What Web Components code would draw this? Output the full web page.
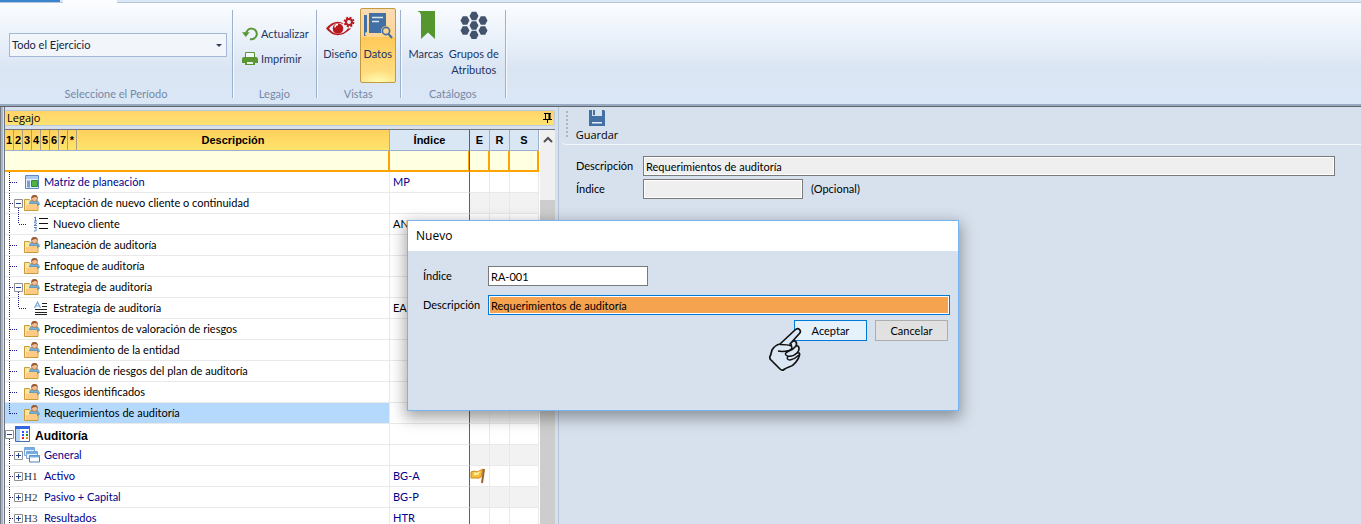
<!DOCTYPE html>
<html lang="es">
<head>
<meta charset="utf-8">
<title>Legajo</title>
<style>
  html, body { height: 100%; margin: 0; }
  body {
    --ui: Lato, "Liberation Sans", sans-serif;
    --heading: "Liberation Sans", Arial, sans-serif;
    --title: "Open Sans", sans-serif;
    --panel: #d7e1ed;
    overflow: hidden;
    font: 11px/16px var(--ui);
    color: #000;
  }
</style>
</head>
<body>
<legajo-app></legajo-app>

<script>
const define = (name, html, setup) => {
  const template = document.createElement("template");
  template.innerHTML = html;
  customElements.define(name, class extends HTMLElement {
    constructor() {
      super();
      this.attachShadow({ mode: "open" });
      this.shadowRoot.appendChild(template.content.cloneNode(true));
    }
    connectedCallback() {
      if (setup) setup(this, this.shadowRoot);
    }
  });
};

const hexagons = [[14, 5], [5, 9.5], [23, 9.5], [14, 14.5], [5, 19.5], [23, 19.5], [14, 24]]
  .map(([x, y]) => `<path d="M${x - 2.2} ${y - 4.2}h4.4l2.300 4.200l-2.300 4.200h-4.400l-2.300 -4.200z"/>`).join("");

// name: [width, height, markup]
const icons = {
  refresh: [16, 16, `<path d="M4.2 8.2A5.3 5.3 0 1 1 8 13" fill="none" stroke="#5a9733" stroke-width="2"/><path d="M0 6.2h7.6L3.8 11z" fill="#5a9733"/>`],
  print: [16, 16, `<path d="M3.5 6V1.5h9V6" fill="#f5faff" stroke="#5a9733" stroke-width="1"/><path d="M2 6h12q2 0 2 2v4h-3V9H3v3H0V8q0-2 2-2z" fill="#5a9733"/><path d="M3 9h10v5H3z" fill="#5a9733"/><path d="M5 11h6v2H5z" fill="#e8f1e4"/>`],
  design: [30, 28, `<path d="M1 17.500Q12 4 26 17.500Q12 31 1 17.500z" fill="#b8181e"/><path d="M4 17.500Q8 12.500 13 12Q19 12 23 17.500Q19 22.500 13 23Q8 22.500 4 17.500z" fill="#edf4fb"/><circle cx="13" cy="17.500" r="5.300" fill="#b8181e"/><path d="M10 16.500a3 3 0 0 1 3-3" stroke="#fff" stroke-width="1.400" fill="none"/><circle cx="24" cy="11" r="6.500" fill="#edf4fb"/><circle cx="24" cy="11" r="3" fill="none" stroke="#b8181e" stroke-width="2"/><circle cx="24" cy="11" r="4.500" fill="none" stroke="#b8181e" stroke-width="1.800" stroke-dasharray="1.900 1.640"/>`],
  data: [30, 28, `<path d="M1 4h3v17q-2 0-2 2q0 2 3 2H1z" fill="#4370a4"/><path d="M6 2h17v20H6z" fill="#4370a4"/><path d="M9 6.500h11M9 10.500h7" stroke="#dce6ec" stroke-width="1.600"/><circle cx="23" cy="20" r="5" fill="#ffd072"/><circle cx="23" cy="20" r="3.600" fill="#fbd691" stroke="#4370a4" stroke-width="1.600"/><path d="M25.500 23l3.500 4" stroke="#4370a4" stroke-width="2.200"/>`],
  bookmark: [20, 28, `<path d="M1 0h18v28l-7-6.500l-7 6.500V5Q5 1 1 0z" fill="#55962f"/>`],
  groups: [28, 28, `<g fill="#43536b">${hexagons}</g>`],
  save: [16, 16, `<path d="M0 0h15l1 1v15H0z" fill="#4370a4"/><path d="M3 0h10v6H3z" fill="#d7e1ed"/><path d="M4 0h2v5H4z" fill="#4370a4"/><path d="M3 12h10v1.500H3z" fill="#e4ecf4"/>`],
  pin: [10, 10, `<path d="M1 .5h7M2.500 0v6M6.500 0v6M0 6.500h9M4.500 7v3" fill="none" stroke="#000"/><path d="M5.500 1h2v5h-2z"/>`],
  up: [10, 8, `<path d="M1 6l4-4l4 4" fill="none" stroke="#505050" stroke-width="2"/>`],
  caret: [6, 3, `<path d="M0 0h6L3 3z" fill="#33415c"/>`],
  folder: [16, 16, `<path d="M.5 4.500h5l1 1.500h7.500v9.500H.5z" fill="#fbe6a0" stroke="#c89c38"/><path d="M2 10h3v-2h8v7H2z" fill="#ffca83"/><path d="M5.500 8.500q0-3 4.500-3q5 0 5.500 4l-2 1V8.500z" fill="#74b3dc" stroke="#3b83b8" stroke-width=".6"/><circle cx="10.500" cy="3.500" r="3" fill="#f3bd94" stroke="#9b623c" stroke-width=".7"/><path d="M7.300 3.400Q7.200 0 10.500 0T13.700 3.400Q12.500 1.500 10 2.300z" fill="#985b32"/>`],
  matrix: [16, 16, `<path d="M1.500 1.500h13v13h-13z" fill="#e9f2ff" stroke="#5f86c9"/><path d="M2 2h12v3H2z" fill="#a9c8f2"/><path d="M3 6.500h3v7H3z" fill="#71a1df"/><path d="M7.500 6.500h6v6h-6z" fill="#50b341" stroke="#2f8b32"/>`],
  list: [16, 16, `<path d="M6 2.500h9M6 7.500h9M6 12.500h9" stroke="#111"/><g fill="none" stroke="#4472b9" stroke-width=".9"><path d="M1 2l1.500-1v4M1 5h3M1 7q2-1.500 2.500 0q0 1-2.500 2.500h3M1 11.500h2.500l-1 1.500q2 .5 0 2H1"/></g>`],
  text: [16, 16, `<path d="M9 3.500h5M9 6.500h5M2 9.500h12M2 12.500h12M2 14.500h12" stroke="#222"/><path d="M1.500 8L4.500 2L7.500 8M3 6h3.500" stroke="#7ba8d2" stroke-width="1.200" fill="none"/>`],
  sheet: [16, 16, `<path d="M.5.5h14v15H.5z" fill="#fff" stroke="#456cb6"/><path d="M0 0h15v3H0z" fill="#3267df"/><path d="M1 3h4v12H1z" fill="#b4d6f4"/><path d="M7 5h2v2H7zM7 8h2v2H7z" fill="#2851ff"/><path d="M11 5h2v2h-2z" fill="#3d7cff"/><path d="M11 8h2v2h-2z" fill="#159a1c"/><path d="M7 11h2v2H7z" fill="#e52323"/><path d="M11 11h2v2h-2z" fill="#e49116"/>`],
  windows: [16, 16, `<g stroke="#7aa6d6" fill="#e9f4ff"><path d="M.5.5h10v8H.5z"/><path d="M2.500 4.500h11v7h-11z"/><path d="M5.500 8.500h10v6.500h-10z" stroke="#4e80bb" fill="#fff"/></g><path d="M.5 1h10v2H.5zM2.500 5h11v2h-11zM5.500 8.500h10v2h-10z" fill="#75aee5"/>`],
  flag: [16, 16, `<path d="M1 4q3-2 6 0l6-3l-2 8q-3 2-5 1H1z" fill="#f6bd36" stroke="#cf8b20"/><path d="M4 4q3 2 6-1l-1 3q-3 2-5 1z" fill="#fff09c"/><path d="M14 1l-2 14" stroke="#9d642c" stroke-width="2"/>`],
  hand: [34, 46, `<path d="M11 18L26 4Q28.500 1.500 30.500 3.500Q32.500 5.500 30 8L21 18Q25 13 27 16Q28 18 27 20Q30 19 30 23Q30 25 28 27Q31 26 30.500 29Q30 32 27 36Q24 40 20 41Q17 42 15 43.500Q13 45 11 43L1.500 33.500Q0 31.500 1.500 29.500L3 24Q6 19 11 18z" fill="#dce8f4" stroke="#111" stroke-width="1.700" stroke-linejoin="round"/><path d="M11 18.500Q19 18.500 22.500 20Q24 23 20 24.500Q14 26 9 25M22 18L22.500 20M27 20Q24 24 19 25.500Q14 28 18.500 30Q24 31 28 27M19 30Q17 34 21 34Q26 33 30 29" fill="none" stroke="#111" stroke-width="1.500"/>`]
};

define("ui-icon", `
<style>
  :host { display: block; flex: none; }
  svg { display: block; }
</style>
<svg aria-hidden="true"></svg>`, (host, root) => {
  const [w, h, body] = icons[host.getAttribute("name")];
  const svg = root.querySelector("svg");
  svg.setAttribute("width", w);
  svg.setAttribute("height", h);
  svg.setAttribute("viewBox", `0 0 ${w} ${h}`);
  svg.innerHTML = body;
});

define("ribbon-group", `
<style>
  :host {
    display: flex;
    flex-direction: column;
    box-sizing: border-box;
    height: 88px;
    padding: 0 4px;
    border-right: 1px solid #9db0cc;
    box-shadow: 1px 0 #f6faff;
  }
  .content { flex: 1; display: flex; min-height: 0; }
  .label { text-align: center; line-height: 8px; color: #7688a6; }
</style>
<div class="content"><slot></slot></div>
<div class="label"></div>`, (host, root) => {
  root.querySelector(".label").textContent = host.getAttribute("label");
});

define("ribbon-button", `
<style>
  :host { display: block; }
  button {
    display: flex;
    align-items: center;
    width: 100%;
    gap: 3px;
    padding: 0;
    border: 1px solid transparent;
    border-radius: 2px;
    background: none;
    font: inherit;
    color: #1e3563;
    white-space: nowrap;
  }
  :host([large]) button {
    flex-direction: column;
    gap: 7px;
    height: 75px;
    padding-top: 2px;
  }
  :host([large]) span { text-align: center; }
  :host([pressed]) button {
    border-color: #c29a42;
    background:
      radial-gradient(ellipse 20px 12px at 50% 100%, #fffbb0, transparent),
      linear-gradient(#fadcb4, #fdd594 38%, #ffc958 39%, #ffe28a);
  }
</style>
<button type="button"><span><slot></slot></span></button>`, (host, root) => {
  const icon = document.createElement("ui-icon");
  icon.setAttribute("name", host.getAttribute("icon"));
  root.querySelector("button").prepend(icon);
});

define("period-select", `
<style>
  :host { display: grid; align-items: center; width: 218px; }
  select, ui-icon { grid-area: 1 / 1; }
  select {
    appearance: none;
    height: 24px;
    padding: 0 2px;
    border: 1px solid #a3b7d6;
    border-radius: 0;
    background: #f2f6fb;
    font: inherit;
    color: #15233f;
  }
  ui-icon { justify-self: end; margin-right: 5px; pointer-events: none; }
</style>
<select aria-label="Seleccione el Período"><option>Todo el Ejercicio</option></select>
<ui-icon name="caret"></ui-icon>`);

define("app-ribbon", `
<style>
  :host { display: block; }
  .tabs {
    display: flex;
    gap: 3px;
    height: 3px;
    background: linear-gradient(#dce8f5 2px, #b5c6dc 2px);
  }
  .file { width: 60px; height: 2px; background: #3c85cc; }
  .active { width: 54px; background: #fbfdff; }
  .body {
    display: flex;
    box-sizing: border-box;
    height: 103px;
    padding-top: 7px;
    background: linear-gradient(#fbfdff, #e7eff9 40%, #dae5f3 65%, #dae7f6);
    border-bottom: 2px solid #98a9c2;
  }
  period-select { margin: 23px 1px 0 5px; align-self: flex-start; }
  .stack { display: flex; flex-direction: column; gap: 7px; padding: 15px 2px 0 4px; }
  ribbon-button[large] { margin-top: -2px; }
</style>
<div class="tabs"><div class="file"></div><div class="active"></div></div>
<div class="body">
  <ribbon-group label="Seleccione el Período"><period-select></period-select></ribbon-group>
  <ribbon-group label="Legajo">
    <div class="stack">
      <ribbon-button icon="refresh">Actualizar</ribbon-button>
      <ribbon-button icon="print">Imprimir</ribbon-button>
    </div>
  </ribbon-group>
  <ribbon-group label="Vistas">
    <ribbon-button large icon="design" style="width: 39px">Diseño</ribbon-button>
    <ribbon-button large pressed icon="data" style="width: 36px">Datos</ribbon-button>
  </ribbon-group>
  <ribbon-group label="Catálogos">
    <ribbon-button large icon="bookmark" style="width: 42px">Marcas</ribbon-button>
    <ribbon-button large icon="groups" style="width: 54px">Grupos de<br>Atributos</ribbon-button>
  </ribbon-group>
</div>`);

// level, toggle ("-", "+" or ""), icon, text, index, state
const rows = [
  [1, "", "matrix", "Matriz de planeación", "MP", "link"],
  [1, "-", "folder", "Aceptación de nuevo cliente o continuidad", ""],
  [2, "", "list", "Nuevo cliente", "AN"],
  [1, "", "folder", "Planeación de auditoría", ""],
  [1, "", "folder", "Enfoque de auditoría", ""],
  [1, "-", "folder", "Estrategia de auditoría", ""],
  [2, "", "text", "Estrategía de auditoría", "EA"],
  [1, "", "folder", "Procedimientos de valoración de riesgos", ""],
  [1, "", "folder", "Entendimiento de la entidad", ""],
  [1, "", "folder", "Evaluación de riesgos del plan de auditoría", ""],
  [1, "", "folder", "Riesgos identificados", ""],
  [1, "", "folder", "Requerimientos de auditoría", "", "selected last"],
  [0, "-", "sheet", "Auditoría", "", "root"],
  [1, "+", "windows", "General", "", "link"],
  [1, "+", "H1", "Activo", "BG-A", "link flagged"],
  [1, "+", "H2", "Pasivo + Capital", "BG-P", "link"],
  [1, "+", "H3", "Resultados", "HTR", "link"]
];

const guides = (level, toggle, last) => {
  const width = [10, 19, 28][level];
  const x = [0, 9, 18][level];
  let lines = "";
  if (level === 0) lines += "M4.5 15v6";
  else lines += `M4.5 0v${last ? 11 : 21}`;
  if (level === 1) lines += `M5 10.5h${toggle ? 4 : 8}`;
  if (level === 2) lines += "M13.5 0v10M14 10.5h8";
  if (level === 1 && toggle === "-") lines += "M13.5 15v6";
  const box = toggle
    ? `<path d="M${x + .5} 6.500h8v8h-8z" fill="#fff" stroke="#8d8d95"/><path d="M${x + 2} 10.500h5${toggle === "+" ? "m-2.500 -2.500v5" : ""}" stroke="#24418c"/>`
    : "";
  return `<svg width="${width}" height="20" viewBox="0 0 ${width} 20"><path d="${lines}" stroke="#1b1b8c" stroke-dasharray="1 1" fill="none"/>${box}</svg>`;
};

const rowHtml = ([level, toggle, icon, text, index, state = ""]) => `
<tr class="${state}">
  <td><div class="node">
    ${guides(level, toggle, state.includes("last"))}
    ${/^H\d/.test(icon) ? `<b class="mark">${icon}</b>` : `<ui-icon name="${icon}"></ui-icon>`}
    <span>${text}</span>
  </div></td>
  <td class="index">${index}</td>
  <td class="flag">${state.includes("flagged") ? `<ui-icon name="flag"></ui-icon>` : ""}</td>
  <td></td>
  <td></td>
</tr>`;

define("legajo-grid", `
<style>
  :host { display: flex; gap: 1px; border-top: 1px solid #70747c; background: #fff; }
  table { flex: 1; table-layout: fixed; border-collapse: separate; border-spacing: 0; width: 100%; }
  th, td { box-sizing: border-box; height: 21px; padding: 0; border-right: 1px solid #e9e9e9; border-bottom: 1px solid #e9e9e9; }
  th { border-color: #9bb0cc; background: #d9e7f5; font: bold 11px/16px var(--heading); }
  th:first-child { background: linear-gradient(#ffd05c, #ffe46c); }
  .levels { display: flex; align-items: center; }
  .levels button {
    width: 9px;
    height: 20px;
    padding: 0;
    border: 0;
    border-right: 1px solid #a79e86;
    background: none;
    font: inherit;
    color: #000;
  }
  .levels span { flex: 1; }
  .filter td { border-right: 2px solid #ffa300; border-bottom: 2px solid #ffa300; background: #ffffe1; }
  .filter input { display: block; box-sizing: border-box; width: 100%; height: 19px; border: 0; background: none; font: inherit; }
  th:nth-child(2), td:nth-child(2) { border-right-color: #606060; }
  .filter td:nth-child(2) { border-right: 1px solid #606060; box-shadow: inset -1px 0 #ffa300; }
  .node { display: flex; align-items: center; height: 20px; white-space: nowrap; }
  .node svg { flex: none; }
  .node span { padding-left: 4px; }
  .mark { width: 16px; font: 11px/16px "Liberation Serif", serif; color: #333; }
  .index { padding-left: 3px; }
  .link { color: #00008b; }
  .root span { padding-top: 3px; font: bold 12px/16px var(--heading); }
  .selected td:first-child { background: #b5d9fd; }
  tbody tr:nth-child(even) td:nth-child(n+3) { background: #f2f2f2; }
  .scroll { width: 15px; background: #f0f0f0; display: flex; flex-direction: column; align-items: center; }
  .scroll ui-icon { margin: 6px 0 56px; }
  .thumb { flex: 1; width: 100%; background: #cdcdcd; }
</style>
<table>
  <colgroup>
    <col><col style="width: 80px"><col style="width: 20px"><col style="width: 20px"><col style="width: 29px">
  </colgroup>
  <thead>
    <tr>
      <th scope="col"><div class="levels"><span>Descripción</span></div></th>
      <th scope="col">Índice</th><th scope="col">E</th><th scope="col">R</th><th scope="col">S</th>
    </tr>
    <tr class="filter"></tr>
  </thead>
  <tbody></tbody>
</table>
<div class="scroll"><ui-icon name="up"></ui-icon><div class="thumb"></div></div>`, (host, root) => {
  const title = root.querySelector(".levels span");
  for (const level of "1234567*") {
    const button = document.createElement("button");
    button.type = "button";
    button.textContent = level;
    title.before(button);
  }
  root.querySelector(".filter").innerHTML = ["Descripción", "Índice", "E", "R", "S"]
    .map((name) => `<td><input aria-label="Filtrar ${name}"></td>`).join("");
  root.querySelector("tbody").innerHTML = rows.map(rowHtml).join("");
});

define("dock-panel", `
<style>
  :host { display: flex; flex-direction: column; border-left: 1px solid #70747c; box-sizing: border-box; }
  header {
    display: flex;
    align-items: center;
    justify-content: space-between;
    height: 14px;
    margin: 3px 0;
    padding: 0 1px 0 2px;
    border: 1px solid #bccbdc;
    border-left: 0;
    border-radius: 2px;
    background: linear-gradient(#ffd469, #ffe272);
    font: 11px/14px var(--title);
  }
  ::slotted(*) { flex: 1; min-height: 0; }
</style>
<header><span></span><ui-icon name="pin"></ui-icon></header>
<slot></slot>`, (host, root) => {
  root.querySelector("span").textContent = host.getAttribute("heading");
});

define("text-field", `
<style>
  :host { display: flex; align-items: center; }
  label { flex: none; width: var(--label-width, 67px); }
  input {
    box-sizing: border-box;
    width: 160px;
    height: 20px;
    padding: 0 2px;
    border: 1px solid #7a7a7a;
    background: #fff;
    font: inherit;
    color: inherit;
  }
  input:read-only { background: #efefef; box-shadow: inset 0 0 0 1px #fff; }
  :host([wide]) input { flex: 1; width: 0; }
  :host([active]) input { border-color: #0078d7; background: #f6a350; box-shadow: inset 0 0 0 1px #fff; }
  ::slotted(*) { margin-left: 8px; }
</style>
<label for="box"></label><input id="box"><slot></slot>`, (host, root) => {
  root.querySelector("label").textContent = host.getAttribute("label");
  const input = root.querySelector("input");
  input.value = host.getAttribute("value") || "";
  input.readOnly = host.hasAttribute("locked");
});

define("detail-pane", `
<style>
  :host { display: block; padding-left: 3px; border-left: 1px solid #b5c5d8; background: var(--panel); }
  .toolbar {
    display: flex;
    height: 37px;
    padding-left: 4px;
    border-bottom: 1px solid #f3f6fa;
    border-bottom-left-radius: 4px;
  }
  .grip { width: 2px; height: 26px; margin: 4px 4px 0 0; background: repeating-linear-gradient(#aeb5be 0 2px, transparent 2px 4px); }
  button {
    display: flex;
    flex-direction: column;
    align-items: center;
    gap: 2px;
    width: 50px;
    padding: 3px 0 0;
    border: 0;
    background: none;
    font: 11px/14px var(--title);
    color: #000;
  }
  form { display: flex; flex-direction: column; gap: 3px; padding: 11px 26px 0 14px; }
</style>
<div class="toolbar">
  <div class="grip"></div>
  <button type="button"><ui-icon name="save"></ui-icon>Guardar</button>
</div>
<form>
  <text-field label="Descripción" value="Requerimientos de auditoría" wide locked></text-field>
  <text-field label="Índice" locked><span>(Opcional)</span></text-field>
</form>`);

define("new-dialog", `
<style>
  :host {
    box-sizing: border-box;
    border: 1px solid #76b3f0;
    background: var(--panel);
    box-shadow: 0 5px 14px 2px rgba(0, 0, 0, .35);
    --label-width: 65px;
  }
  h2 { margin: 0; padding-left: 8px; background: #fff; font: 12px/30px var(--title); }
  form { display: flex; flex-direction: column; gap: 9px; padding: 15px 8px 0 15px; }
  .actions { display: flex; justify-content: flex-end; gap: 8px; margin-top: -4px; padding-right: 2px; }
  button {
    width: 73px;
    height: 21px;
    padding: 0;
    border: 1px solid #adadad;
    background: #e1e1e1;
    font: inherit;
    color: #000;
  }
  .primary { border-color: #0078d7; background: #e5f1fb; }
  ui-icon { position: absolute; left: 361px; top: 105px; pointer-events: none; }
</style>
<h2>Nuevo</h2>
<form>
  <text-field label="Índice" value="RA-001"></text-field>
  <text-field label="Descripción" value="Requerimientos de auditoría" wide active></text-field>
  <div class="actions">
    <button type="button" class="primary">Aceptar</button>
    <button type="button">Cancelar</button>
  </div>
</form>
<ui-icon name="hand"></ui-icon>`);

define("legajo-app", `
<style>
  :host { display: flex; flex-direction: column; height: 100vh; background: var(--panel); }
  main {
    flex: 1;
    display: grid;
    grid-template-columns: 41% 1fr;
    min-height: 0;
    overflow: hidden;
    border-top: 1px solid #62666c;
  }
  dock-panel { margin-left: 4px; padding-right: 3px; min-height: 0; }
  .left { display: grid; min-height: 0; background: linear-gradient(90deg, #777b82 1px, #a8b6c9 1px 3px, var(--panel) 3px); }
  new-dialog { position: absolute; left: 407px; top: 220px; width: 552px; height: 191px; }
</style>
<app-ribbon></app-ribbon>
<main>
  <div class="left"><dock-panel heading="Legajo"><legajo-grid></legajo-grid></dock-panel></div>
  <detail-pane></detail-pane>
</main>
<new-dialog role="dialog" aria-label="Nuevo"></new-dialog>`);
</script>
</body>
</html>
